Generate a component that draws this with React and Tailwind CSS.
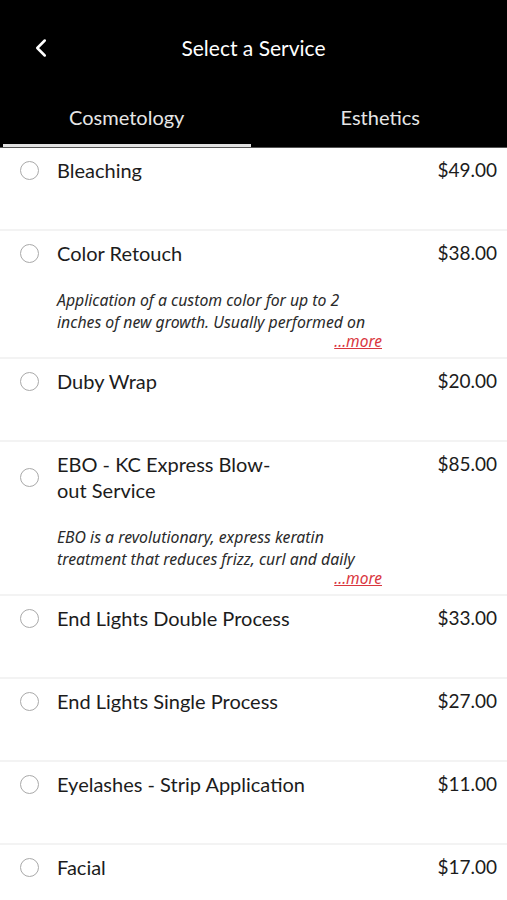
import { ChevronLeft } from "lucide-react";

const services = [
  { name: ["Bleaching"], price: "$49.00" },
  {
    name: ["Color Retouch"],
    price: "$38.00",
    desc: ["Application of a custom color for up to 2", "inches of new growth. Usually performed on"],
  },
  { name: ["Duby Wrap"], price: "$20.00" },
  {
    name: ["EBO - KC Express Blow-", "out Service"],
    price: "$85.00",
    desc: ["EBO is a revolutionary, express keratin", "treatment that reduces frizz, curl and daily"],
  },
  { name: ["End Lights Double Process"], price: "$33.00" },
  { name: ["End Lights Single Process"], price: "$27.00" },
  { name: ["Eyelashes - Strip Application"], price: "$11.00" },
  { name: ["Facial"], price: "$17.00" },
];

const ServiceRow = ({ name, price, desc }) => (
  <div className="min-h-[83px] border-b-2 border-[#f3f3f3] pt-[9px] pb-2 pl-5 pr-[10px]">
    <div className="flex items-start">
      <div className="flex items-center self-stretch">
        <span className="w-[19px] h-[19px] rounded-full border-[1.5px] border-[#a9a9a9]" />
      </div>
      <div className="ml-[18px] flex-1 text-[20px] leading-[26px] text-[#1c1c1c]">
        {name.map((line) => (
          <div key={line} className="whitespace-nowrap">{line}</div>
        ))}
      </div>
      <div className="text-[19px] leading-[26px] text-[#1c1c1c]">{price}</div>
    </div>
    {desc && (
      <div className="ml-[37px] mt-[23px] w-[325px]">
        {desc.map((line) => (
          <div
            key={line}
            className="whitespace-nowrap italic text-[15.8px] leading-[22px] text-[#2a2a2a] font-['Noto_Sans',sans-serif]"
          >
            {line}
          </div>
        ))}
        <div className="text-right italic text-[15.5px] leading-[16px] text-[#d9363e] underline font-['Noto_Sans',sans-serif]">
          ...more
        </div>
      </div>
    )}
  </div>
);

export default function App() {
  return (
    <div className="w-[507px] h-[900px] overflow-hidden bg-white" style={{ fontFamily: "Lato, 'Noto Sans', sans-serif" }}>
      <header className="bg-black">
        <div className="relative flex items-center justify-center h-[96px]">
          <ChevronLeft className="absolute left-[26px] text-white" size={30} strokeWidth={2} />
          <h1 className="text-white text-[21px]">Select a Service</h1>
        </div>
        <div className="flex border-b border-[#555] mt-[8px]">
          <div className="flex-1 flex flex-col items-center">
            <span className="text-[#e6e6e6] text-[20px] leading-[26px] pb-[14px]">Cosmetology</span>
            <span className="ml-[3px] w-[248px] h-[3px] bg-[#e2e2e2] self-start" />
          </div>
          <div className="flex-1 flex flex-col items-center">
            <span className="text-[#e6e6e6] text-[20px] leading-[26px] pb-[14px]">Esthetics</span>
            <span className="h-[3px]" />
          </div>
        </div>
      </header>
      <div>
        {services.map((s) => (
          <ServiceRow key={s.name[0]} {...s} />
        ))}
      </div>
    </div>
  );
}
